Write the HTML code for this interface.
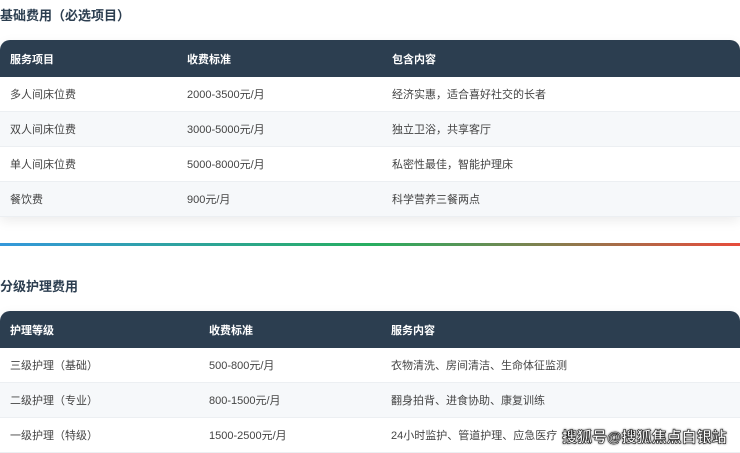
<!DOCTYPE html>
<html><head><meta charset="utf-8"><style>
body{margin:0;width:740px;height:453px;overflow:hidden;background:#fff;font-family:"Liberation Sans","Noto Sans CJK SC",sans-serif;color:#333;position:relative}
.t{position:absolute;left:0;font-size:13px;font-weight:bold;color:#2c3e50}
.tb{position:absolute;left:0;width:740px;border-radius:10px 10px 0 0;overflow:hidden;box-shadow:0 4px 12px rgba(0,0,0,.08)}
.r{height:35px;display:flex;align-items:center;font-size:11px;color:#444;border-bottom:1px solid #eceff2;box-sizing:border-box;position:relative}
.r span{position:absolute}
.h{height:37px;background:#2c3e50;color:#fff;font-weight:bold;border:none}
.r:nth-child(odd):not(.h){background:#f6f8fa}
.line{position:absolute;left:0;top:243px;width:740px;height:3px;background:linear-gradient(90deg,#3498db,#27ae60 50%,#e74c3c)}
.wm{position:absolute;left:562px;top:426px;font-size:15px;color:#fff;font-weight:bold;-webkit-text-stroke:0.6px #222;text-shadow:0 0 2px #000;letter-spacing:0}
</style></head><body>
<div class="t" style="top:5px">基础费用（必选项目）</div>
<div class="tb" style="top:40px">
<div class="r h"><span style="left:10px">服务项目</span><span style="left:187px">收费标准</span><span style="left:392px">包含内容</span></div>
<div class="r"><span style="left:10px">多人间床位费</span><span style="left:187px">2000-3500元/月</span><span style="left:392px">经济实惠，适合喜好社交的长者</span></div>
<div class="r"><span style="left:10px">双人间床位费</span><span style="left:187px">3000-5000元/月</span><span style="left:392px">独立卫浴，共享客厅</span></div>
<div class="r"><span style="left:10px">单人间床位费</span><span style="left:187px">5000-8000元/月</span><span style="left:392px">私密性最佳，智能护理床</span></div>
<div class="r"><span style="left:10px">餐饮费</span><span style="left:187px">900元/月</span><span style="left:392px">科学营养三餐两点</span></div>
</div>
<div class="line"></div>
<div class="t" style="top:276px">分级护理费用</div>
<div class="tb" style="top:311px">
<div class="r h"><span style="left:10px">护理等级</span><span style="left:209px">收费标准</span><span style="left:391px">服务内容</span></div>
<div class="r"><span style="left:10px">三级护理（基础）</span><span style="left:209px">500-800元/月</span><span style="left:391px">衣物清洗、房间清洁、生命体征监测</span></div>
<div class="r"><span style="left:10px">二级护理（专业）</span><span style="left:209px">800-1500元/月</span><span style="left:391px">翻身拍背、进食协助、康复训练</span></div>
<div class="r" style="background:#fff"><span style="left:10px">一级护理（特级）</span><span style="left:209px">1500-2500元/月</span><span style="left:391px">24小时监护、管道护理、应急医疗</span></div>
</div>
<div class="wm">搜狐号@搜狐焦点白银站</div>
</body></html>
